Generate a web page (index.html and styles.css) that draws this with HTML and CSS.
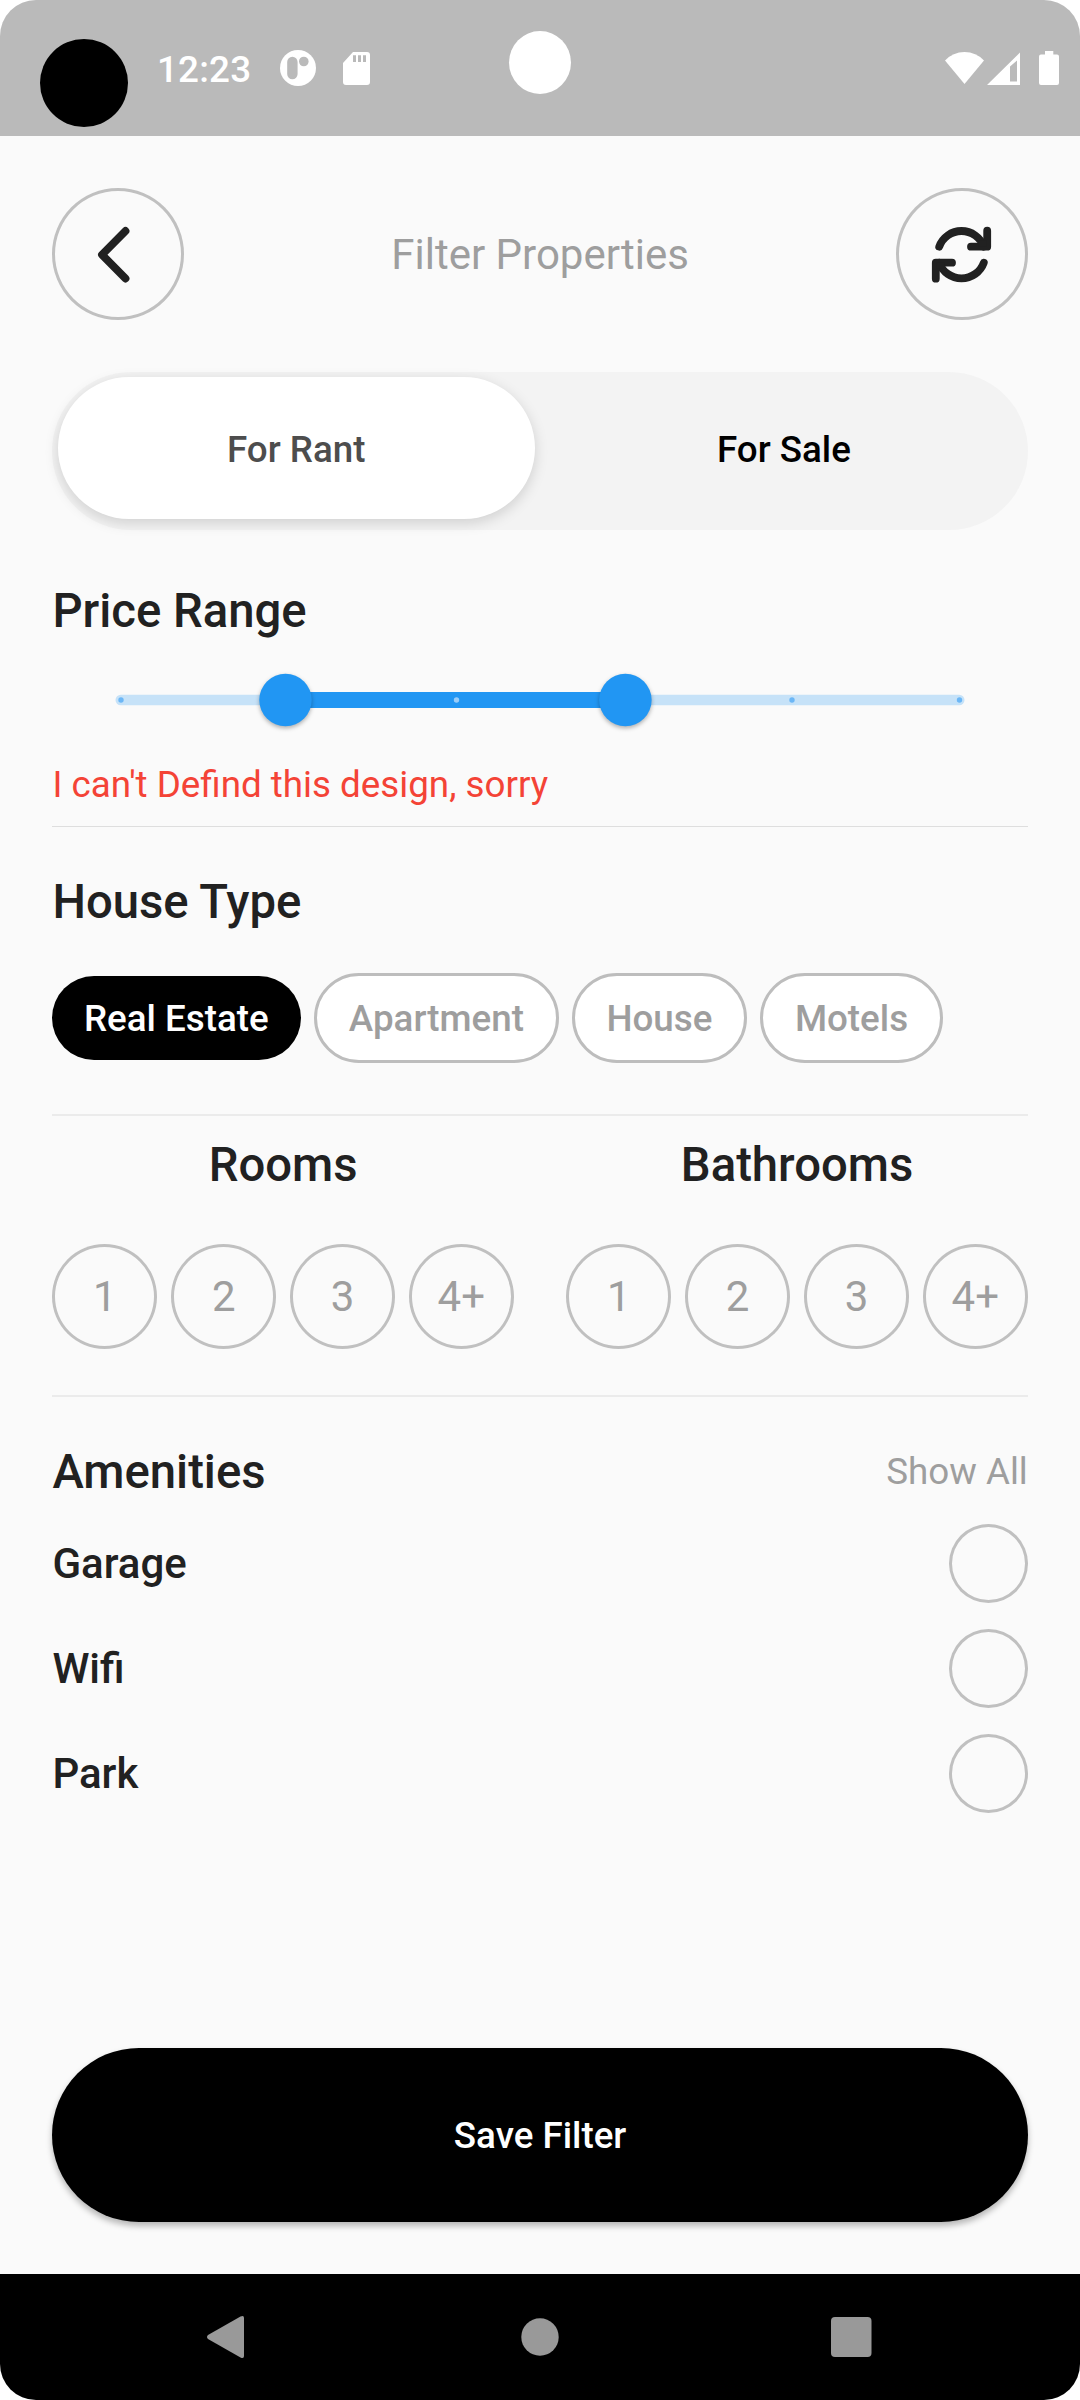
FILE: index.html
```html
<!DOCTYPE html>
<html lang="en">
<head>
<meta charset="utf-8">
<title>Filter Properties</title>
<link rel="stylesheet" href="styles.css">
</head>
<body>
<div class="screen">
  <header class="status">
    <span class="status-dot"></span>
    <span class="status-time">12:23</span>
    <svg class="icon-app" width="36" height="36" viewBox="0 0 36 36"><circle cx="18" cy="18" r="18" fill="#fff"/><rect x="7.200" y="6.700" width="10.400" height="22.600" rx="5.200" fill="#bababa"/><circle cx="23.800" cy="11.500" r="4.800" fill="#bababa"/></svg>
    <svg class="icon-sd" width="27" height="33" viewBox="0 0 27 33"><path fill="#fff" fill-rule="evenodd" d="M10 0H24a3 3 0 0 1 3 3V30a3 3 0 0 1-3 3H3a3 3 0 0 1-3-3V11ZM10 3.2V10h3V3.2ZM15 3.2V10h3V3.2ZM20 3.2V10h3V3.2Z"/></svg>
    <span class="camera"></span>
    <svg class="icon-signal" width="115" height="36" viewBox="0 0 115 36" fill="#fff"><path d="M0 9.5Q8 1 19.5 1T39 9.5L19.5 33Z"/><path fill-rule="evenodd" d="M42 34 75 1.5V34ZM65 15.5V30.5h7V9.5Z"/><path d="M100 0h8.300v3.500H112a2 2 0 0 1 2 2V32a2 2 0 0 1-2 2H96a2 2 0 0 1-2-2V5.500a2 2 0 0 1 2-2H100Z"/></svg>
  </header>

  <main class="content">
    <div class="topbar">
      <button class="round-btn" aria-label="Back">
        <svg width="131" height="131" viewBox="0 0 131 131"><path d="M73.500 42 50 65.700 73.500 89.500" class="stroke"/></svg>
      </button>
      <h1 class="title">Filter Properties</h1>
      <button class="round-btn" aria-label="Reset">
        <svg width="131" height="131" viewBox="-65.500 -65.700 131 131"><g class="stroke"><path d="M-22.300-8A23.700 23.700 0 0 1 22.300-8"/><path d="M25.700-24V-8H9.500"/><path d="M22.300 8A23.700 23.700 0 0 1-22.300 8"/><path d="M-25.700 24V8H-9.500"/></g><path d="M17-14 25-14 25-8 17-8ZM-17 14-25 14-25 8-17 8Z" fill="#212121"/></svg>
      </button>
    </div>

    <div class="toggle">
      <button class="toggle-item selected">For Rant</button>
      <button class="toggle-item">For Sale</button>
    </div>

    <section class="price">
      <h2 class="heading">Price Range</h2>
      <svg class="slider" width="975" height="60" viewBox="0 0 975 60">
        <rect x="63.500" y="24.750" width="849" height="10.500" rx="5.250" fill="#c6e2f8"/>
        <rect x="233" y="22" width="340" height="16" fill="#2196f3"/>
        <g fill="#6cb7f6"><circle cx="69" cy="30" r="2.700"/><circle cx="740" cy="30" r="2.700"/><circle cx="907.500" cy="30" r="2.700"/></g>
        <circle cx="404.500" cy="30" r="2.700" fill="#98ccf9"/>
        <g class="thumb"><circle cx="233.500" cy="30" r="26.250"/><circle cx="573.400" cy="30" r="26.250"/></g>
      </svg>
      <p class="error">I can't Defind this design, sorry</p>
    </section>

    <section class="types">
      <h2 class="heading">House Type</h2>
      <div class="chips">
        <span class="chip active">Real Estate</span>
        <span class="chip">Apartment</span>
        <span class="chip">House</span>
        <span class="chip">Motels</span>
      </div>
    </section>

    <section class="counts">
      <div class="count">
        <h2 class="heading">Rooms</h2>
        <div class="numbers"><span class="num">1</span><span class="num">2</span><span class="num">3</span><span class="num">4+</span></div>
      </div>
      <div class="count">
        <h2 class="heading">Bathrooms</h2>
        <div class="numbers"><span class="num">1</span><span class="num">2</span><span class="num">3</span><span class="num">4+</span></div>
      </div>
    </section>

    <section class="amenities">
      <div class="amenities-head"><h2 class="heading">Amenities</h2><a class="show-all">Show All</a></div>
      <ul class="list">
        <li class="row"><span>Garage</span><i class="check"></i></li>
        <li class="row"><span>Wifi</span><i class="check"></i></li>
        <li class="row"><span>Park</span><i class="check"></i></li>
      </ul>
    </section>

    <button class="save">Save Filter</button>
  </main>

  <nav class="navbar">
    <svg width="1080" height="126" viewBox="0 0 1080 126" fill="#999"><path d="M208 61 240.500 42.600Q244 41 244 44V82Q244 85 240.500 83.400L208 65Q206 63 208 61Z"/><circle cx="540" cy="63" r="18.700"/><rect x="831" y="43" width="40.500" height="40" rx="4"/></svg>
  </nav>
</div>
</body>
</html>
```

FILE: styles.css
```css
* { box-sizing: border-box; margin: 0; padding: 0; }
body { background: #fff; font-family: Roboto, sans-serif; color: #212121; }
button { border: 0; background: none; font: inherit; color: inherit; }

.screen {
  width: 1080px; height: 2400px;
  display: flex; flex-direction: column;
  background: #fafafa;
  border-radius: 36px; overflow: hidden;
}

.status {
  position: relative;
  height: 136px; flex: none;
  display: flex; align-items: flex-start;
  padding-left: 40px;
  background: #bababa; color: #fff;
}
.status-dot { width: 88px; height: 88px; margin-top: 39px; border-radius: 50%; background: #000; }
.status-time { margin: 48px 0 0 29px; width: 94px; font-size: 36.75px; line-height: 44px; font-weight: 500; letter-spacing: 0.2px; }
.icon-app { margin: 50px 0 0 29px; }
.icon-sd { margin: 51.5px 0 0 27px; }
.camera { position: absolute; left: 509px; top: 31px; width: 62px; height: 63px; border-radius: 50%; background: #fff; }
.icon-signal { margin: 50.5px 20px 0 auto; }

.content {
  flex: 1; min-height: 0;
  display: flex; flex-direction: column;
  padding: 52.5px 52.2px 52px 52.4px;
}

.topbar { display: flex; justify-content: space-between; align-items: center; height: 131px; }
.round-btn { width: 131.5px; height: 132px; border-radius: 50%; box-shadow: inset 0 0 0 3px #c0c0c0; }
.round-btn svg { display: block; }
.stroke { fill: none; stroke: #212121; stroke-width: 7.8; stroke-linecap: round; stroke-linejoin: round; }
.title { padding-top: 1px; font-size: 42px; line-height: 50px; font-weight: 400; color: #9e9e9e; }

.toggle {
  display: grid; grid-template-columns: 1fr 1fr; flex: none;
  height: 157.5px; margin-top: 52.5px; padding: 5.25px 0 10.5px;
  border-radius: 79px; background: #f3f3f3;
}
.toggle-item { padding-top: 3px; border-radius: 71px; font-size: 36.75px; line-height: 44px; font-weight: 500; color: #000; }
.toggle-item.selected { margin: 0 5.25px; background: #fff; color: #4d4d4d; box-shadow: 0 4px 14px rgba(0, 0, 0, 0.15); }

.heading { font-size: 47.25px; line-height: 56px; font-weight: 500; }

.price { padding: 53px 0 20px; border-bottom: 1px solid #dedede; }
.slider { display: block; margin: 31px 0 33px; overflow: visible; }
.thumb { fill: #2196f3; filter: drop-shadow(0 2px 2px rgba(0, 0, 0, 0.3)); }
.error { font-size: 36.75px; line-height: 43px; color: #f44336; }

.types { padding: 47px 0 51px; border-bottom: 2px solid #ebebeb; }
.chips { display: flex; align-items: center; gap: 13px; height: 90px; margin-top: 43px; }
.chip {
  height: 90px; padding: 0 32px 0 31.5px;
  border: 3px solid #bdbdbd; border-radius: 45px;
  background: #fff; color: #9e9e9e;
  font-size: 36.75px; line-height: 86px; font-weight: 500;
}
.chip.active { height: 84px; padding: 0 32.6px 0 31.6px; border: 0; background: #000; color: #fff; }

.counts { display: grid; grid-template-columns: 1fr 1fr; gap: 52.5px; padding: 21px 0 46px; border-bottom: 2px solid #ebebeb; }
.count .heading { text-align: center; }
.numbers { display: flex; justify-content: space-between; margin-top: 51px; }
.num {
  width: 105px; height: 105px; border-radius: 50%;
  box-shadow: inset 0 0 0 3px #c0c0c0;
  font-size: 42px; line-height: 105px; text-align: center; color: #9e9e9e;
}

.amenities { padding-top: 47px; }
.amenities-head { display: flex; justify-content: space-between; align-items: center; }
.show-all { font-size: 36.75px; line-height: 44px; color: #9e9e9e; }
.list { display: grid; gap: 26px; margin-top: 24.5px; list-style: none; }
.row { display: flex; justify-content: space-between; align-items: center; height: 79px; font-size: 42px; line-height: 50px; font-weight: 500; }
.check { width: 79px; height: 79px; border-radius: 50%; box-shadow: inset 0 0 0 3px #c0c0c0; }

.save {
  height: 174px; margin-top: auto; border-radius: 87px;
  background: #000; color: #fff;
  font-size: 36.75px; font-weight: 500;
  box-shadow: 0 4px 6px rgba(0, 0, 0, 0.28);
}

.navbar { height: 126px; flex: none; background: #000; }
.navbar svg { display: block; }
```
